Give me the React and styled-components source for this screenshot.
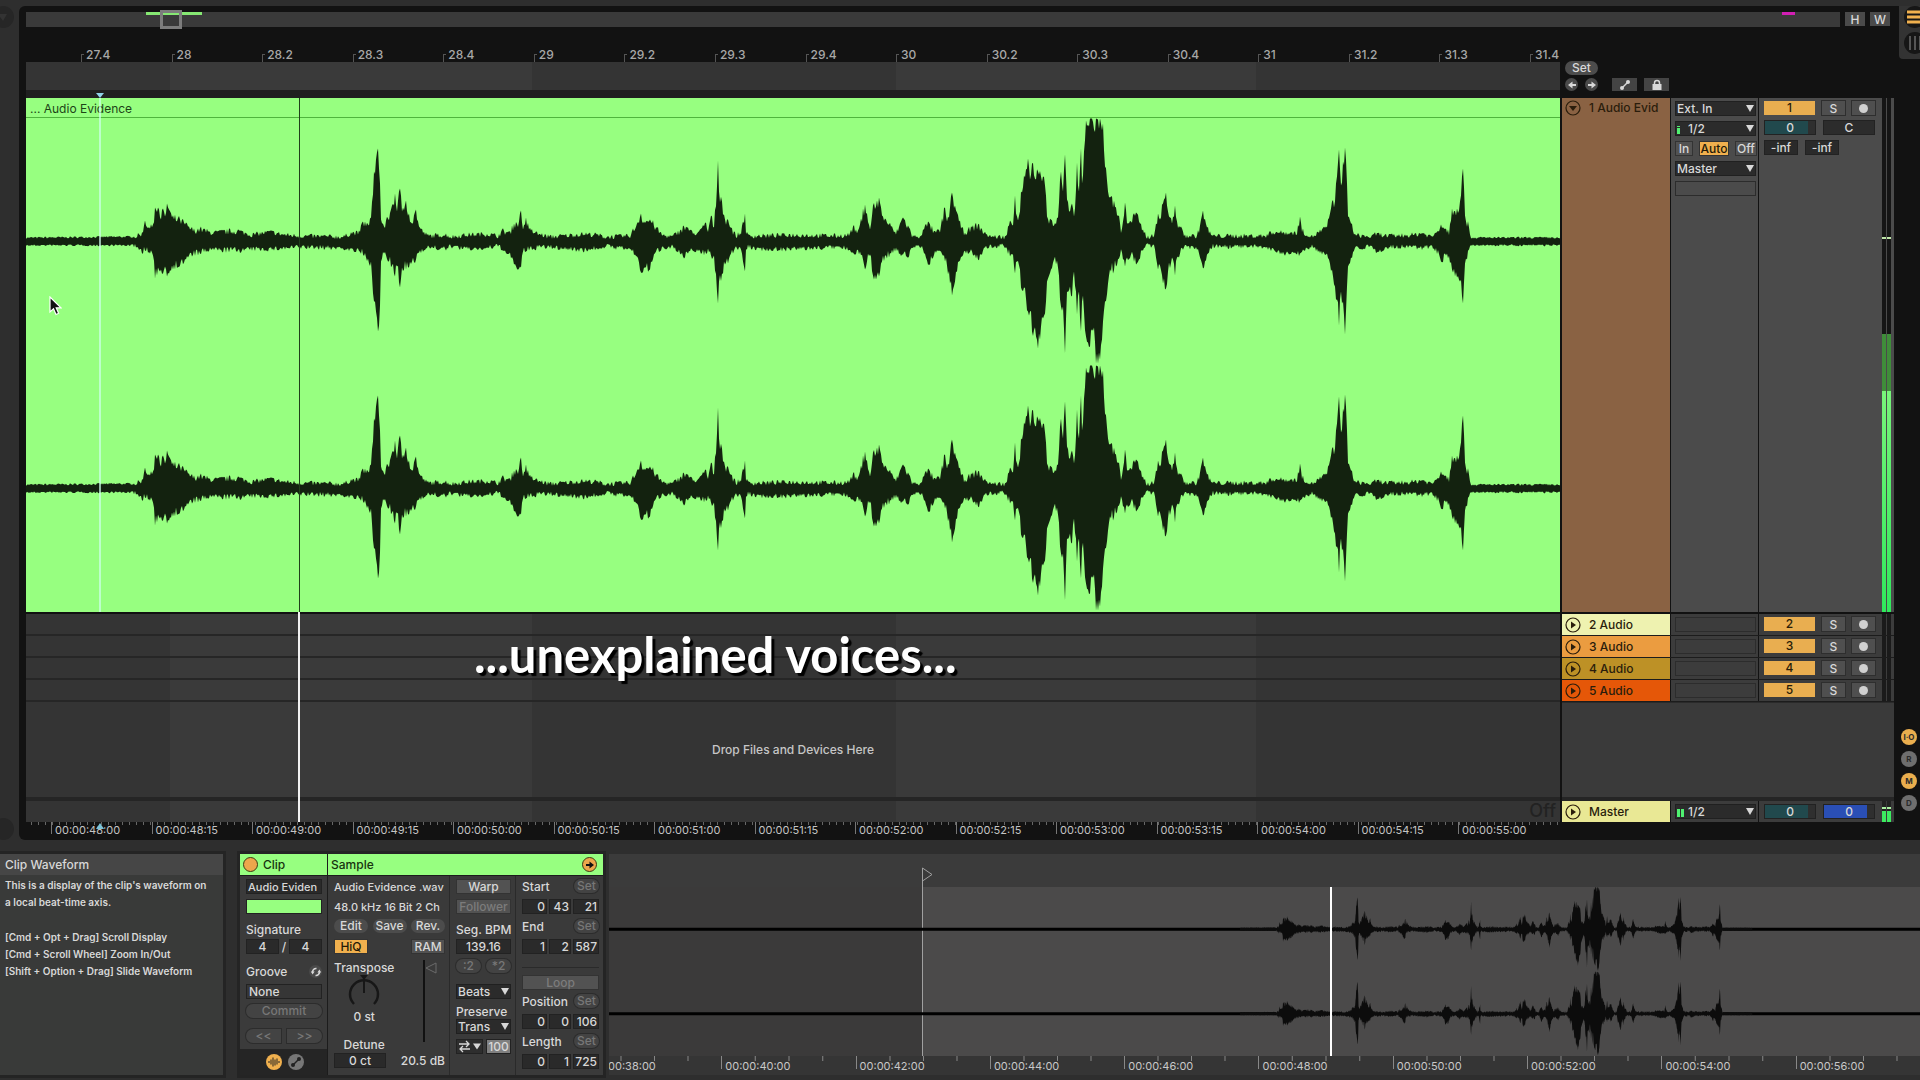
import React from "react";
import styled, { createGlobalStyle, css } from "styled-components";

/* ---------- waveform data: x, height above, height below ---------- */

const ENVELOPE = `
26 4 4|134 5 4|142 8 10|145 21 9|150 13 12|153 17 14|155 34 37|158 34 26|161 22 28|163 33 32|165 25 25|167 38 35
172 24 24|180 22 24|188 15 16|194 11 12|200 13 12|211 9 8|222 10 9|238 11 9|251 7 8|270 10 8|285 7 7|299 6 6
344 5 7|351 9 9|359 9 10|363 20 13|369 16 22|371 24 20|374 70 60|376 82 70|378 93 90|380 58 64|381 22 20|384 15 12
388 23 20|392 36 24|395 48 35|397 30 25|400 53 46|402 30 26|406 41 28|409 28 26|412 18 20|416 32 18|419 15 11
424 9 7|428 6 6|446 7 8|451 5 5|466 7 8|487 8 7|498 6 5|503 11 8|506 10 12|510 9 14|514 18 23|519 20 27|521 31 26
523 12 10|526 24 10|529 12 9|538 8 6|550 5 6|584 8 9|597 7 7|605 5 5|630 6 8|637 18 15|641 28 31|644 20 26|650 22 28
656 14 10|662 7 7|672 5 5|681 12 13|684 15 17|688 14 12|693 8 8|700 10 11|706 19 12|708 10 9|711 26 14|714 14 14
717 55 50|718 81 62|719 50 40|722 40 32|725 22 23|728 22 22|731 14 12|736 6 6|741 9 7|743 20 20|745 28 30|746 10 10
748 6 6|760 6 8|791 7 8|838 6 6|849 7 8|853 15 11|858 9 10|860 17 10|865 37 28|867 28 20|870 12 13|873 36 34|876 35 38
879 44 35|882 26 20|886 22 14|891 15 12|896 8 7|900 18 12|903 24 13|909 14 15|912 6 5|919 4 4|923 12 8|929 19 23
934 9 12|940 11 9|945 34 20|947 20 24|950 34 42|952 49 54|955 36 40|959 20 20|964 9 10|972 14 10|978 17 18|985 8 7
993 5 5|1006 5 5|1010 21 15|1013 16 13|1015 46 32|1017 25 20|1020 30 28|1021 50 46|1024 66 46|1028 83 70|1030 62 70
1032 78 90|1036 62 95|1038 70 107|1041 65 85|1045 56 72|1047 25 40|1051 22 28|1054 16 18|1058 24 26|1061 70 65
1063 50 65|1065 87 112|1067 42 50|1070 30 45|1072 38 55|1074 25 30|1076 52 50|1077 79 73|1079 50 50|1081 93 90
1082 58 60|1084 90 70|1086 121 95|1090 124 105|1094 112 86|1096 124 122|1100 124 118|1103 118 80|1105 75 60|1108 50 42
1111 45 30|1116 34 25|1119 26 17|1121 10 8|1123 20 18|1125 39 25|1127 18 16|1131 20 13|1136 29 23|1139 20 18|1143 12 9
1147 5 4|1154 6 6|1156 18 16|1158 28 28|1160 22 24|1163 38 42|1166 49 47|1168 30 30|1172 18 16|1175 36 34|1177 20 16
1180 14 12|1185 6 6|1197 6 7|1200 16 16|1203 31 27|1207 14 13|1212 6 5|1265 6 6|1272 10 9|1288 9 13|1297 9 12
1300 25 12|1302 11 12|1306 8 7|1312 5 5|1322 12 13|1327 14 12|1332 40 28|1335 40 45|1337 65 58|1339 92 84|1341 56 50
1343 80 60|1345 94 93|1347 58 45|1348 25 25|1351 18 16|1355 7 7|1372 5 5|1376 8 11|1388 6 6|1414 7 6|1422 9 7
1432 5 5|1437 11 10|1441 17 20|1446 13 14|1449 10 15|1452 33 28|1457 33 36|1460 40 40|1463 73 62|1465 26 22|1469 14 8
1471 4 4|1560 4 4`;

const points = ENVELOPE.trim()
  .split(/[|\n]/)
  .map(p => p.trim().split(" ").map(Number));

function buildLane(center) {
  let seed = 7;
  const rand = () => {
    seed = (seed * 16807) % 2147483647;
    return seed / 2147483647;
  };
  const top = [];
  const bottom = [];
  for (let i = 0; i < points.length - 1; i++) {
    const [x0, u0, d0] = points[i];
    const [x1, u1, d1] = points[i + 1];
    for (let x = x0; x < x1; x++) {
      const t = (x - x0) / (x1 - x0);
      let up = u0 + (u1 - u0) * t;
      let down = d0 + (d1 - d0) * t;
      if (x !== x0 || up < 12) {
        const wobble = up < 5 ? 2 : up < 10 ? 5 : 4 + Math.min(up, 60) * 0.25;
        up = Math.max(2, up + (rand() - 0.6) * wobble);
        down = Math.max(2, down + (rand() - 0.6) * wobble);
      }
      top.push(`${x} ${(center - Math.min(up, 123)).toFixed(1)}`);
      bottom.unshift(`${x} ${(center + Math.min(down, 123)).toFixed(1)}`);
    }
  }
  return `M${top.join("L")}L1560 ${center - 3}L1560 ${center + 3}L${bottom.join(
    "L"
  )}Z`;
}

const WAVE_PATH = buildLane(123.5) + buildLane(370.5);

/* ---------- content ---------- */

const BEATS = [
  "27.4", "28", "28.2", "28.3", "28.4", "29", "29.2", "29.3", "29.4", "30",
  "30.2", "30.3", "30.4", "31", "31.2", "31.3"
];

const TIMES = [
  "48:00", "48:15", "49:00", "49:15", "50:00", "50:15", "51:00", "51:15",
  "52:00", "52:15", "53:00", "53:15", "54:00", "54:15"
];

const CLIP_TIMES = ["38", "40", "42", "44", "46", "48", "50", "52", "54", "56"];

const TRACKS = [
  { id: 2, color: "#eef2b0" },
  { id: 3, color: "#eb9c40" },
  { id: 4, color: "#bd9126" },
  { id: 5, color: "#e55708" }
];

/* ---------- small parts ---------- */

function Arrow({ left }) {
  return (
    <svg width="12" height="12" viewBox="0 0 12 12" aria-hidden="true">
      <g transform={left ? "rotate(180 6 6)" : undefined}>
        <path d="M2 6h4" stroke="currentColor" strokeWidth="2" />
        <path d="M5.5 2.5L10 6L5.5 9.5Z" fill="currentColor" />
      </g>
    </svg>
  );
}

function Nodes() {
  return (
    <svg width="12" height="12" viewBox="0 0 12 12" aria-hidden="true">
      <path d="M3 9L9 3" stroke="currentColor" strokeWidth="1.5" />
      <circle cx="3" cy="9" r="2" fill="currentColor" />
      <circle cx="9" cy="3" r="2" fill="currentColor" />
    </svg>
  );
}

function Lock() {
  return (
    <svg width="12" height="12" viewBox="0 0 12 12" aria-hidden="true">
      <path d="M3.5 6V4a2.5 2.5 0 0 1 5 0V6" stroke="currentColor" strokeWidth="1.5" fill="none" />
      <rect x="1.5" y="5" width="9" height="6" fill="currentColor" />
    </svg>
  );
}

function Fold({ open }) {
  return (
    <svg width="16" height="16" viewBox="0 0 16 16" aria-hidden="true">
      <circle cx="8" cy="8" r="7" fill="none" stroke="currentColor" strokeWidth="1.2" />
      <path d={open ? "M4 6H12L8 11Z" : "M6 4.5L11 8L6 11.5Z"} fill="currentColor" />
    </svg>
  );
}

function Drop({ label, value, wide, children }) {
  return (
    <DropWrap>
      {children}
      <DropSelect aria-label={label} defaultValue={value} $indent={wide}>
        <option>{value}</option>
      </DropSelect>
    </DropWrap>
  );
}

function TrackRow({ id, color }) {
  return (
    <TrackStrip>
      <TrackHead $color={color}>
        <FoldButton aria-label={`Unfold track ${id}`}>
          <Fold />
        </FoldButton>
        <span>{id} Audio</span>
      </TrackHead>
      <IoCell $dim>
        <EmptyBox />
      </IoCell>
      <MixCell $dim>
        <Line>
          <NumberButton>{id}</NumberButton>
          <SquareButton aria-label="Solo">S</SquareButton>
          <SquareButton aria-label="Arm">
            <Dot />
          </SquareButton>
        </Line>
      </MixCell>
      <MeterCell $dim>
        <MeterBar />
        <MeterBar />
      </MeterCell>
    </TrackStrip>
  );
}

function Fields({ label, values }) {
  return (
    <Triple>
      {values.map((v, i) => (
        <Field key={i} aria-label={`${label} ${i + 1}`} defaultValue={v} $right />
      ))}
    </Triple>
  );
}

/* ---------- sections ---------- */

function Overview() {
  return (
    <OverviewRow>
      <OverviewBar>
        <OverviewClip $left="6.6%" $width="56px" $color="#86e873" />
        <OverviewClip $left="96.8%" $width="13px" $color="#d21fb4" />
        <OverviewWindow />
      </OverviewBar>
      <SizeButton>H</SizeButton>
      <SizeButton>W</SizeButton>
    </OverviewRow>
  );
}

function Timeline() {
  return (
    <TimelineColumn>
      <BeatRuler>
        {BEATS.map(b => (
          <Beat key={b}>{b}</Beat>
        ))}
        <Beat $last>31.4</Beat>
      </BeatRuler>
      <LoopBand />
      <ScrubBand>
        <Marker />
      </ScrubBand>
      <Lanes>
        <Clip>
          <ClipTitle>... Audio Evidence</ClipTitle>
          <Wave viewBox="26 0 1534 494" preserveAspectRatio="none" aria-label="Waveform">
            <path d={WAVE_PATH} fill="#13220f" />
          </Wave>
          <InsertLine />
          <ClipPlayhead />
        </Clip>
        <LowerLanes>
          <EmptyLane />
          <EmptyLane />
          <EmptyLane />
          <EmptyLane />
          <DropZone>Drop Files and Devices Here</DropZone>
          <MasterLane>Off</MasterLane>
          <Playhead />
          <Caption>...unexplained voices...</Caption>
        </LowerLanes>
        <Pointer width="13" height="20" viewBox="0 0 13 20" aria-hidden="true">
          <path
            d="M1 1V16L4.5 12.8L7 18.5L9.6 17.3L7.2 11.8H12Z"
            fill="#111"
            stroke="#fff"
            strokeWidth="1.2"
          />
        </Pointer>
      </Lanes>
      <TimeRuler>
        <Marker $up />
        {TIMES.map(t => (
          <Time key={t}>00:00:{t}</Time>
        ))}
        <Time $last>00:00:55:00</Time>
      </TimeRuler>
    </TimelineColumn>
  );
}

function Tracks() {
  return (
    <TrackColumn>
      <SetBar>
        <Pill $width="33px">Set</Pill>
        <SetLine>
          <RoundButton aria-label="Previous locator">
            <Arrow left />
          </RoundButton>
          <RoundButton aria-label="Next locator">
            <Arrow />
          </RoundButton>
          <ToolButton aria-label="Automation mode">
            <Nodes />
          </ToolButton>
          <ToolButton aria-label="Lock envelopes">
            <Lock />
          </ToolButton>
        </SetLine>
      </SetBar>
      <MainStrip>
        <TrackHead $color="#8a6243" $top>
          <FoldButton aria-label="Fold track 1">
            <Fold open />
          </FoldButton>
          <span>1 Audio Evid</span>
        </TrackHead>
        <IoCell>
          <Drop label="Input type" value="Ext. In" />
          <Drop label="Input channel" value="1/2" wide>
            <Signal />
          </Drop>
          <Line>
            <Toggle $width="18px">In</Toggle>
            <Toggle $width="30px" $on>
              Auto
            </Toggle>
            <Toggle $width="22px">Off</Toggle>
          </Line>
          <Drop label="Output type" value="Master" />
          <EmptyBox />
        </IoCell>
        <MixCell>
          <Line>
            <NumberButton>1</NumberButton>
            <SquareButton aria-label="Solo">S</SquareButton>
            <SquareButton aria-label="Arm">
              <Dot />
            </SquareButton>
          </Line>
          <Line>
            <Level aria-label="Volume" defaultValue="0" $fill="#21494d" />
            <Level aria-label="Pan" defaultValue="C" />
          </Line>
          <PeakLine>
            <Field aria-label="Peak left" defaultValue="-inf" $center />
            <Field aria-label="Peak right" defaultValue="-inf" $center />
          </PeakLine>
        </MixCell>
        <MeterCell>
          <MeterBar $live />
          <MeterBar $live />
        </MeterCell>
      </MainStrip>
      {TRACKS.map(t => (
        <TrackRow key={t.id} {...t} />
      ))}
      <TrackSpace />
      <MasterStrip>
        <TrackHead $color="#e9e895">
          <FoldButton aria-label="Unfold master">
            <Fold />
          </FoldButton>
          <span>Master</span>
        </TrackHead>
        <IoCell $dim>
          <Drop label="Cue out" value="1/2" wide>
            <Signal $double />
          </Drop>
        </IoCell>
        <MixCell $dim>
          <Line>
            <Level aria-label="Master volume" defaultValue="0" $fill="#21494d" />
            <Level aria-label="Cue volume" defaultValue="0" $fill="#2a4fb5" />
          </Line>
        </MixCell>
        <MeterCell $dim>
          <MeterBar $small />
          <MeterBar $small />
        </MeterCell>
      </MasterStrip>
    </TrackColumn>
  );
}

function Rail() {
  return (
    <RailColumn>
      <RailTop>
        <RailIcon aria-label="Arrangement view" $on>
          <svg width="22" height="22" viewBox="0 0 22 22">
            <path d="M3 6h19M3 11h19M3 16h19" stroke="currentColor" strokeWidth="3" />
          </svg>
        </RailIcon>
        <RailIcon aria-label="Session view">
          <svg width="22" height="22" viewBox="0 0 22 22">
            <path d="M6 4v14M11 4v14M16 4v14" stroke="currentColor" strokeWidth="2" />
          </svg>
        </RailIcon>
      </RailTop>
      <RailToggles>
        <RailToggle $on>I·O</RailToggle>
        <RailToggle>R</RailToggle>
        <RailToggle $on>M</RailToggle>
        <RailToggle>D</RailToggle>
      </RailToggles>
    </RailColumn>
  );
}

function ClipBox() {
  return (
    <ClipBoxWrap>
      <ClipSide>
        <BoxTitle>
          <OrangeDot aria-label="Clip active" />
          Clip
        </BoxTitle>
        <ClipBody>
          <Row>
            <NameField aria-label="Clip name" defaultValue="Audio Eviden" />
          </Row>
          <Row>
            <ColorBar />
          </Row>
          <Row $align="center">Signature</Row>
          <Row>
            <Field aria-label="Signature numerator" defaultValue="4" $center />
            <Slash>/</Slash>
            <Field aria-label="Signature denominator" defaultValue="4" $center />
          </Row>
          <Row $h="25px" $align="center" $between>
            Groove
            <RoundButton aria-label="Hot-swap groove">
              <svg width="12" height="12" viewBox="0 0 12 12">
                <path
                  d="M6.5 2.5A3.5 3.5 0 0 0 2.6 6.5M5.5 9.5A3.5 3.5 0 0 0 9.4 5.5"
                  fill="none"
                  stroke="currentColor"
                  strokeWidth="1.6"
                />
                <path d="M0.8 5.5H4.6L2.6 8.4ZM7.4 6.5H11.2L9.4 3.6Z" fill="currentColor" />
              </svg>
            </RoundButton>
          </Row>
          <Row>
            <Field aria-label="Groove" defaultValue="None" $flat />
          </Row>
          <Row $h="25px">
            <Pill $width="100%" $off>
              Commit
            </Pill>
          </Row>
          <Row $between>
            <Nudge $side="left">&lt;&lt;</Nudge>
            <Nudge $side="right">&gt;&gt;</Nudge>
          </Row>
        </ClipBody>
        <ViewToggles>
          <ViewToggle aria-label="Sample box" $on>
            <svg width="12" height="12" viewBox="0 0 12 12">
              <path
                d="M1 5v2M3 3.5v5M5 1.5v9M7 3.5v6M9 2.5v6M11 5v2"
                stroke="currentColor"
                strokeWidth="1"
              />
            </svg>
          </ViewToggle>
          <ViewToggle aria-label="Envelope box">
            <Nodes />
          </ViewToggle>
        </ViewToggles>
      </ClipSide>
      <SampleSide>
        <BoxTitle $between>
          Sample
          <OrangeDot aria-label="Show sample">
            <Arrow />
          </OrangeDot>
        </BoxTitle>
        <SampleBody>
          <SampleCol $width="122px">
            <Row>
              <FileText>Audio Evidence .wav</FileText>
            </Row>
            <Row>
              <FileText>48.0 kHz 16 Bit 2 Ch</FileText>
            </Row>
            <Row $between>
              <Pill $width="34px">Edit</Pill>
              <Pill $width="34px">Save</Pill>
              <Pill $width="34px">Rev.</Pill>
            </Row>
            <Row $between>
              <Toggle $width="34px" $on>
                HiQ
              </Toggle>
              <Toggle $width="34px">RAM</Toggle>
            </Row>
            <PitchArea>
              <PitchColumn>
                <span>Transpose</span>
                <svg width="32" height="34" viewBox="0 0 32 34" aria-label="Transpose knob">
                  <path
                    d="M6 29A14 14 0 1 1 26 29"
                    fill="none"
                    stroke="#171717"
                    strokeWidth="2.5"
                  />
                  <path d="M16 5V18" stroke="#171717" strokeWidth="2" />
                  <path d="M12 0H20L16 5Z" fill="#171717" />
                </svg>
                <span>0 st</span>
                <DetuneLabel>Detune</DetuneLabel>
              </PitchColumn>
              <svg width="26" height="82" viewBox="0 0 26 82" aria-label="Gain slider">
                <path d="M5 0V82" stroke="#111" strokeWidth="2" />
                <path d="M7 8L17 3V13Z" fill="none" stroke="#6a6a6a" />
              </svg>
            </PitchArea>
            <Row $between>
              <DetuneField aria-label="Detune" defaultValue="0 ct" $center />
              20.5 dB
            </Row>
          </SampleCol>
          <SampleCol $width="66px">
            <Row>
              <Toggle $width="100%">Warp</Toggle>
            </Row>
            <Row>
              <Toggle $width="100%" $off>
                Follower
              </Toggle>
            </Row>
            <Row $align="center">
              <label htmlFor="bpm">Seg. BPM</label>
            </Row>
            <Row>
              <Field id="bpm" defaultValue="139.16" $center />
            </Row>
            <Row $h="25px" $between>
              <Pill $width="25px" $off>
                :2
              </Pill>
              <Pill $width="25px" $off>
                *2
              </Pill>
            </Row>
            <Row>
              <Drop label="Warp mode" value="Beats" />
            </Row>
            <Row $h="15px">Preserve</Row>
            <Row>
              <Drop label="Preserve" value="Trans" />
            </Row>
            <Row $between>
              <LoopMode aria-label="Transient loop mode">
                <svg width="24" height="13" viewBox="0 0 24 13">
                  <path
                    d="M1 4H11M8 1L11 4L8 7M12 9H2M5 6L2 9L5 12"
                    fill="none"
                    stroke="currentColor"
                    strokeWidth="1.3"
                  />
                  <path d="M15 3.5H23L19 9.5Z" fill="currentColor" />
                </svg>
              </LoopMode>
              <EnvelopeField aria-label="Transient envelope" defaultValue="100" $center />
            </Row>
          </SampleCol>
          <SampleCol $width="87px">
            <Row $between>
              Start <SetPill>Set</SetPill>
            </Row>
            <Row>
              <Fields label="Start" values={["0", "43", "21"]} />
            </Row>
            <Row $between>
              End <SetPill>Set</SetPill>
            </Row>
            <Row>
              <Fields label="End" values={["1", "2", "587"]} />
            </Row>
            <Row $h="16px" $align="center">
              <Rule />
            </Row>
            <Row $h="19px">
              <Toggle $width="100%" $off>
                Loop
              </Toggle>
            </Row>
            <Row $between>
              Position <SetPill>Set</SetPill>
            </Row>
            <Row>
              <Fields label="Position" values={["0", "0", "106"]} />
            </Row>
            <Row $between>
              Length <SetPill>Set</SetPill>
            </Row>
            <Row>
              <Fields label="Length" values={["0", "1", "725"]} />
            </Row>
          </SampleCol>
        </SampleBody>
      </SampleSide>
    </ClipBoxWrap>
  );
}

function Detail() {
  return (
    <DetailRow>
      <InfoPanel>
        <InfoTitle>Clip Waveform</InfoTitle>
        <InfoText>
          This is a display of the clip's waveform on
          <br />a local beat-time axis.
        </InfoText>
        <InfoText>
          [Cmd + Opt + Drag] Scroll Display
          <br />
          [Cmd + Scroll Wheel] Zoom In/Out
          <br />
          [Shift + Option + Drag] Slide Waveform
        </InfoText>
      </InfoPanel>
      <ClipBox />
      <Viewer>
        <ViewerTop />
        <ViewerWave>
          <ClipRegion />
          <Wave viewBox="-1863 0 3925 494" preserveAspectRatio="none" aria-label="Clip waveform">
            <path d="M-1863 119H134V128H-1863ZM1471 119H2062V128H1471ZM-1863 366H134V375H-1863ZM1471 366H2062V375H1471Z" />
            <path d={WAVE_PATH} fill="#0c0c0c" />
          </Wave>
          <ViewerPlayhead />
          <StartFlag width="12" height="20" viewBox="0 0 12 20" aria-hidden="true">
            <path d="M0.5 1L10 7.5L0.5 14Z" fill="none" stroke="#a0a0a0" />
            <path d="M0.5 1V20" stroke="#a0a0a0" />
          </StartFlag>
        </ViewerWave>
        <ViewerRuler>
          {CLIP_TIMES.map(t => (
            <ViewerTime key={t}>00:00:{t}:00</ViewerTime>
          ))}
        </ViewerRuler>
      </Viewer>
    </DetailRow>
  );
}

export default function App() {
  return (
    <Shell>
      <GlobalStyle />
      <Arrangement>
        <Gutter>
          <GutterIcon>
            <svg width="10" height="10" viewBox="0 0 10 10" aria-hidden="true">
              <path d="M0 2H9L5 9Z" fill="#333" />
            </svg>
          </GutterIcon>
          <GutterIcon />
        </Gutter>
        <Panel>
          <Overview />
          <Columns>
            <Timeline />
            <Tracks />
          </Columns>
        </Panel>
        <Rail />
      </Arrangement>
      <Detail />
    </Shell>
  );
}

/* ---------- styles ---------- */

const GlobalStyle = createGlobalStyle`
  *, *::before, *::after {
    box-sizing: border-box;
  }

  body {
    margin: 0;
    background: #2e2e2e;
  }

  button, input, select {
    font: inherit;
    color: inherit;
    margin: 0;
    padding: 0;
    border: 0;
    border-radius: 0;
    outline: 0;
  }

  svg {
    display: block;
    flex: none;
  }
`;

const center = css`
  display: flex;
  align-items: center;
  justify-content: center;
`;

const bands = css`
  background-image: linear-gradient(
    to right,
    #343434 9.4%,
    #3a3a3a 9.4% 33%,
    #343434 33% 56.7%,
    #3a3a3a 56.7% 80.2%,
    #343434 80.2%
  );
`;

const Shell = styled.div`
  display: flex;
  flex-direction: column;
  min-height: 100vh;
  overflow: hidden;
  font-family: Inter, "Liberation Sans", sans-serif;
  font-size: 12px;
  font-weight: 500;
  line-height: 15px;
  color: #d8d8d8;
  white-space: nowrap;
`;

const Arrangement = styled.main`
  flex: 1;
  display: flex;
  padding-top: 6px;
`;

const Gutter = styled.div`
  width: 19px;
  display: flex;
  flex-direction: column;
  justify-content: space-between;
  overflow: hidden;
`;

const GutterIcon = styled.div`
  ${center}
  width: 22px;
  height: 22px;
  margin-left: -8px;
  border-radius: 50%;
  background: #262626;
`;

const Panel = styled.div`
  flex: 1;
  min-width: 0;
  display: flex;
  flex-direction: column;
  padding-left: 7px;
  background: #121212;
  border-radius: 6px 0 0 6px;
`;

const OverviewRow = styled.div`
  display: flex;
  gap: 5px;
  padding: 6px 4px 0 0;
`;

const OverviewBar = styled.div`
  position: relative;
  flex: 1;
  height: 15px;
  background: #3a3a3a;
`;

const OverviewClip = styled.div`
  position: absolute;
  top: 0;
  left: ${p => p.$left};
  width: ${p => p.$width};
  height: 3px;
  background: ${p => p.$color};
`;

const OverviewWindow = styled.div`
  position: absolute;
  top: -2px;
  left: 7.4%;
  width: 22px;
  height: 19px;
  border: 3px solid #7c7c7c;
`;

const SizeButton = styled.button`
  ${center}
  width: 20px;
  height: 14px;
  background: #4a4a4a;
`;

const Columns = styled.div`
  flex: 1;
  display: grid;
  grid-template-columns: minmax(0, 1fr) 334px;
`;

const TimelineColumn = styled.section`
  display: flex;
  flex-direction: column;
`;

const BeatRuler = styled.div`
  display: flex;
  align-items: flex-end;
  height: 35px;
  padding-left: 55px;
  overflow: hidden;
`;

const Beat = styled.span`
  flex: ${p => (p.$last ? "0 0 30px" : "1 1 0")};
  height: 15px;
  padding-left: 5px;
  color: #a8a8a8;
  line-height: 16px;
  background: linear-gradient(#555, #555) 0 7px / 1px 8px no-repeat,
    linear-gradient(#555, #555) 0 7px / 3px 1px no-repeat;
`;

const LoopBand = styled.div`
  height: 28px;
  ${bands}
`;

const ScrubBand = styled.div`
  position: relative;
  height: 8px;
  background: #202020;
`;

const Marker = styled.div`
  position: absolute;
  left: calc(5% - 7px);
  top: ${p => (p.$up ? "1px" : "3px")};
  border: 4px solid transparent;
  ${p => (p.$up ? "border-top: 0;" : "border-bottom: 0;")}
  ${p => (p.$up ? "border-bottom: 6px solid #7cc4d8;" : "border-top: 5px solid #8fd3e8;")}
`;

const Lanes = styled.div`
  position: relative;
  flex: 1;
  display: flex;
  flex-direction: column;
`;

const Clip = styled.div`
  position: relative;
  flex: 1;
  min-height: 300px;
  display: flex;
  flex-direction: column;
  background: #97ff80;
`;

const ClipTitle = styled.div`
  height: 20px;
  padding: 0 4px;
  font-weight: 400;
  line-height: 21px;
  color: #1d4417;
  border-bottom: 1px solid #4fb53d;
`;

const Wave = styled.svg`
  position: absolute;
  left: 0;
  bottom: 0;
  width: 100%;
  height: 100%;

  ${Clip} & {
    height: calc(100% - 20px);
  }
`;

const InsertLine = styled.div`
  position: absolute;
  top: 0;
  bottom: 0;
  left: calc(5% - 4px);
  width: 2px;
  background: rgba(205, 255, 235, 0.7);
`;

const ClipPlayhead = styled.div`
  position: absolute;
  top: 0;
  bottom: 0;
  left: 17.8%;
  width: 1px;
  background: #20401a;
`;

const LowerLanes = styled.div`
  position: relative;
  border-top: 2px solid #111;
  ${bands}
`;

const EmptyLane = styled.div`
  height: 22px;
  border-bottom: 2px solid #262626;
`;

const DropZone = styled.div`
  ${center}
  height: 95px;
  color: #c6c6c6;
`;

const MasterLane = styled.div`
  height: 25px;
  padding-right: 4px;
  border-top: 4px solid #252525;
  font-size: 18px;
  line-height: 20px;
  text-align: right;
  color: #222;
`;

const Playhead = styled.div`
  position: absolute;
  top: -2px;
  bottom: 0;
  left: calc(17.8% - 1px);
  width: 2px;
  background: #f2f2f2;
`;

const Caption = styled.p`
  position: absolute;
  top: 10px;
  left: 29.2%;
  margin: 0;
  font-family: Lato, sans-serif;
  font-size: 49px;
  font-weight: 700;
  line-height: 60px;
  color: #fff;
  text-shadow: 3px 3px 1px #000;
`;

const Pointer = styled.svg`
  position: absolute;
  top: 198px;
  left: 23px;
`;

const TimeRuler = styled.div`
  position: relative;
  display: flex;
  height: 18px;
  padding-left: 25px;
  background: linear-gradient(to right, #666 1px, transparent 1px) 5px 0 / 7px 3px repeat-x;
`;

const Time = styled.span`
  flex: ${p => (p.$last ? "0 0 102px" : "1 1 0")};
  padding-left: 3px;
  border-left: 1px solid #777;
  height: 12px;
  font-size: 11px;
  font-weight: 400;
  line-height: 16px;
  color: #c4c4c4;
`;

const TrackColumn = styled.section`
  display: flex;
  flex-direction: column;
  padding-left: 2px;
  padding-bottom: 18px;
`;

const SetBar = styled.div`
  display: flex;
  flex-direction: column;
  gap: 3px;
  height: 71px;
  padding: 34px 3px 0;
`;

const SetLine = styled.div`
  display: flex;
  align-items: center;

  button + button {
    margin-left: 7px;
  }

  button:nth-child(3) {
    margin-left: 14px;
  }
`;

const pillOff = css`
  color: #777;
  background: #434343;
  box-shadow: 0 0 0 1px #2c2c2c;
`;

const Pill = styled.button`
  ${center}
  width: ${p => p.$width};
  height: 14px;
  flex: none;
  border-radius: 7px;
  background: #4c4c4c;
  line-height: 14px;
  ${p => p.$off && pillOff}
`;

const SetPill = styled(Pill).attrs({ $width: "25px", $off: true })``;

const RoundButton = styled.button`
  ${center}
  width: 13px;
  height: 13px;
  flex: none;
  border-radius: 50%;
  background: #4a4a4a;
`;

const ToolButton = styled.button`
  ${center}
  width: 25px;
  height: 13px;
  background: #444;
`;

const strip = css`
  display: grid;
  grid-template-columns: 108px 87px 123px 1fr;
  column-gap: 1px;
`;

const MainStrip = styled.div`
  ${strip}
  flex: 1;
  border-bottom: 2px solid #111;
`;

const TrackStrip = styled.div`
  ${strip}
  height: 22px;
  border-bottom: 1px solid #1c1c1c;
`;

const MasterStrip = styled.div`
  ${strip}
  height: 21px;
`;

const TrackHead = styled.div`
  display: flex;
  align-items: ${p => (p.$top ? "flex-start" : "center")};
  gap: 8px;
  padding: ${p => (p.$top ? "2px 3px" : "0 3px")};
  overflow: hidden;
  color: #2a1d0c;
  background: ${p => p.$color};
`;

const FoldButton = styled.button`
  background: none;
`;

const IoCell = styled.div`
  display: flex;
  flex-direction: column;
  gap: 5px;
  padding: 3px 2px 2px 4px;
  background: ${p => (p.$dim ? "#3c3c3c" : "#4b4b4b")};
`;

const MixCell = styled(IoCell)`
  padding-left: 5px;
`;

const Line = styled.div`
  display: flex;
  gap: 6px;

  ${MixCell} & {
    gap: 7px;
  }
`;

const PeakLine = styled(Line)`
  width: 75px;
`;

const DropWrap = styled.div`
  position: relative;
  flex: 1 1 auto;
  max-height: 15px;
  height: 15px;

  &::after {
    content: "";
    position: absolute;
    right: 2px;
    top: 4px;
    border: 4px solid transparent;
    border-top: 7px solid #d8d8d8;
    border-bottom: 0;
    pointer-events: none;
  }
`;

const DropSelect = styled.select`
  display: block;
  width: 100%;
  height: 15px;
  padding-left: ${p => (p.$indent ? "12px" : "1px")};
  appearance: none;
  background: #2b2b2b;
  border: 1px solid #202020;
  line-height: 13px;
`;

const Signal = styled.i`
  position: absolute;
  left: 2px;
  bottom: 2px;
  width: ${p => (p.$double ? "7px" : "3px")};
  height: 8px;
  background: ${p =>
    p.$double
      ? "linear-gradient(to right, #4ff070 3px, #2b2b2b 3px 4px, #4ff070 4px)"
      : "linear-gradient(#4ff070 1px, #2b2b2b 1px 2px, #4ff070 2px)"};
`;

const EmptyBox = styled.div`
  height: 15px;
  border: 1px solid #2c2c2c;
`;

const Toggle = styled.button`
  ${center}
  width: ${p => p.$width};
  height: 15px;
  flex: none;
  background: ${p => (p.$on ? "#f0b04e" : "#525252")};
  color: ${p => (p.$on ? "#241a08" : p.$off ? "#7c7c7c" : "inherit")};
  line-height: 15px;
  border: 1px solid #333;
`;

const NumberButton = styled.button`
  width: 51px;
  height: 14px;
  line-height: 14px;
  background: #e9ae50;
  color: #2a1d08;
`;

const SquareButton = styled.button`
  ${center}
  width: 23px;
  height: 14px;
  background: #4f4f4f;
  box-shadow: 0 0 0 1px #2e2e2e;
`;

const Dot = styled.i`
  width: 9px;
  height: 9px;
  border-radius: 50%;
  background: #d0d0d0;
`;

const Level = styled.input`
  width: 52px;
  height: 15px;
  text-align: center;
  border: 1px solid #222;
  background: ${p =>
    p.$fill
      ? `linear-gradient(to right, ${p.$fill} 43px, #2f2f2f 43px)`
      : "#2c2c2c"};
`;

const MeterCell = styled.div`
  display: flex;
  gap: 1px;
  margin-left: -1px;
  padding-right: 3px;
  background: ${p => (p.$dim ? "#3c3c3c" : "#4b4b4b")};
`;

const live = css`
  background: linear-gradient(
    #151515 27%,
    #bfe6a8 27% 27.5%,
    #151515 27.5% 46%,
    #3f8d3a 46% 57%,
    #78f47a 57%,
    #2fe95c
  );
`;

const small = css`
  background: linear-gradient(#222 6px, #a8f0a0 6px 8px, #222 8px 10px, #3cec60 10px);
`;

const MeterBar = styled.div`
  flex: 1;
  background: #1a1a1a;
  ${p => p.$live && live}
  ${p => p.$small && small}
`;

const TrackSpace = styled.div`
  height: 99px;
  background: #3a3a3a;
  border-top: 1px solid #2a2a2a;
  border-bottom: 4px solid #252525;
`;

const RailColumn = styled.div`
  width: 26px;
  display: flex;
  flex-direction: column;
  justify-content: space-between;
  background: #121212;
  overflow: hidden;
`;

const RailTop = styled.div`
  display: flex;
  flex-direction: column;
  gap: 4px;
  height: 53px;
  margin-left: 5px;
  padding-left: 5px;
  background: #333;
  border-radius: 0 0 0 4px;
`;

const RailIcon = styled.button`
  width: 22px;
  height: 22px;
  border-radius: 50%;
  background: #161616;
  color: ${p => (p.$on ? "#f0b04e" : "#555")};
`;

const RailToggles = styled.div`
  display: flex;
  flex-direction: column;
  gap: 6px;
  padding: 0 0 29px 7px;
`;

const RailToggle = styled.button`
  ${center}
  width: 16px;
  height: 16px;
  border-radius: 50%;
  font-size: 8px;
  line-height: 16px;
  font-weight: 700;
  background: ${p => (p.$on ? "#eaae4e" : "#6e6e6e")};
  color: #2a2a2a;
`;

const DetailRow = styled.section`
  display: flex;
  height: 240px;
  padding: 14px 0 5px;
`;

const InfoPanel = styled.aside`
  width: 223px;
  flex: none;
  background: #393a39;
  box-shadow: 0 0 0 3px #242424;
`;

const InfoTitle = styled.h2`
  margin: 0 0 2px;
  padding: 0 5px;
  height: 21px;
  font-size: 12px;
  font-weight: 500;
  line-height: 21px;
  background: #464646;
`;

const InfoText = styled.p`
  margin: 0 0 18px;
  padding: 0 5px;
  font-size: 10px;
  font-weight: 600;
  line-height: 17px;
`;

const ClipBoxWrap = styled.div`
  display: flex;
  gap: 1px;
  width: 363px;
  flex: none;
  margin: 0 6px 0 17px;
  background: #1c1c1c;
  box-shadow: 0 0 0 3px #242424;
`;

const ClipSide = styled.div`
  width: 87px;
  display: flex;
  flex-direction: column;
`;

const SampleSide = styled.div`
  flex: 1;
  display: flex;
  flex-direction: column;
`;

const BoxTitle = styled.div`
  display: flex;
  align-items: center;
  justify-content: ${p => (p.$between ? "space-between" : "flex-start")};
  gap: 5px;
  height: 21px;
  padding: 0 6px 0 3px;
  margin-bottom: 1px;
  background: #97ff80;
  color: #17330f;
`;

const OrangeDot = styled.button`
  ${center}
  width: 15px;
  height: 15px;
  border: 1px solid #3d3a12;
  border-radius: 50%;
  background: #eda64c;
  color: #111;
`;

const ClipBody = styled.div`
  flex: 1;
  padding: 3px 5px 0 6px;
  background: #3b3b3b;
`;

const Row = styled.div`
  display: flex;
  align-items: ${p => p.$align || "flex-start"};
  justify-content: ${p => (p.$between ? "space-between" : "flex-start")};
  height: ${p => p.$h || "20px"};
`;

const Field = styled.input`
  flex: 1 1 0;
  min-width: 0;
  width: 100%;
  height: 15px;
  padding: 0 2px;
  line-height: 13px;
  text-align: ${p => (p.$center ? "center" : p.$right ? "right" : "left")};
  background: ${p => (p.$flat ? "#363636" : "#2a2a2a")};
  border: 1px solid #222;
  ${p => (p.$center || p.$right) && "padding: 0 1px;"}
`;

const NameField = styled(Field)`
  padding: 0 1px;
  font-size: 11px;
`;

const ColorBar = styled.div`
  flex: 1;
  height: 15px;
  border: 1px solid #222;
  background: #97ff80;
`;

const Slash = styled.span`
  width: 10px;
  text-align: center;
`;

const Nudge = styled.button`
  width: 35px;
  height: 14px;
  line-height: 14px;
  border-radius: ${p => (p.$side === "left" ? "7px 0 0 7px" : "0 7px 7px 0")};
  ${pillOff}
`;

const ViewToggles = styled.div`
  display: flex;
  justify-content: center;
  align-items: center;
  gap: 6px;
  height: 26px;
  padding-left: 3px;
  background: #252525;
`;

const ViewToggle = styled.button`
  ${center}
  width: 16px;
  height: 16px;
  border-radius: 50%;
  background: ${p => (p.$on ? "#f0b04e" : "#777")};
  color: #222;
`;

const SampleBody = styled.div`
  flex: 1;
  display: flex;
  background: #3a3a3a;
`;

const SampleCol = styled.div`
  width: ${p => p.$width};
  padding: 3px 4px 0 6px;
  border-right: 1px solid #2a2a2a;

  &:last-child {
    border-right: 0;
  }
`;

const FileText = styled.span`
  font-size: 11px;
  line-height: 17px;
`;

const PitchArea = styled.div`
  display: flex;
  justify-content: space-between;
  align-items: flex-start;
  height: 94px;
  padding-top: 1px;
`;

const PitchColumn = styled.div`
  display: flex;
  flex-direction: column;
  align-items: center;
`;

const DetuneLabel = styled.span`
  margin-top: 13px;
`;

const DetuneField = styled(Field)`
  flex: 0 0 52px;
`;

const EnvelopeField = styled(Field)`
  flex: 0 0 25px;
  background: #808080;
`;

const LoopMode = styled.button`
  ${center}
  width: 27px;
  height: 15px;
  background: #2e2e2e;
  border: 1px solid #222;
`;

const Triple = styled.div`
  display: grid;
  grid-template-columns: 25px 22px 26px;
  gap: 2px;
`;

const Rule = styled.hr`
  flex: 1;
  margin: 0;
  border: 0;
  border-top: 1px solid #2a2a2a;
`;

const Viewer = styled.div`
  flex: 1;
  min-width: 0;
  display: flex;
  flex-direction: column;
  overflow: hidden;
  background: #3b3a3a;
`;

const ViewerTop = styled.div`
  height: 33px;
  background: #3b3b3b;
`;

const ViewerWave = styled.div`
  position: relative;
  flex: 1;
`;

const ClipRegion = styled.div`
  height: 100%;
  margin-left: 23.9%;
  border-left: 1px solid #a0a0a0;
  background: #4b4a4a;
`;

const ViewerPlayhead = styled.div`
  position: absolute;
  top: 0;
  bottom: 0;
  left: 55%;
  width: 2px;
  background: #fff;
`;

const StartFlag = styled.svg`
  position: absolute;
  top: -20px;
  left: 23.9%;
`;

const ViewerRuler = styled.div`
  display: flex;
  height: 19px;
  margin-left: -22px;
  background: #353535;
`;

const ViewerTime = styled.span`
  flex: 0 0 calc(10% + 1px);
  padding-left: 4px;
  font-size: 11px;
  font-weight: 400;
  line-height: 20px;
  color: #c8c8c8;
  background: linear-gradient(to right, #888 1px, transparent 1px) 0 0 / 25% 5px repeat-x,
    linear-gradient(#888, #888) 0 0 / 1px 13px no-repeat;
`;
